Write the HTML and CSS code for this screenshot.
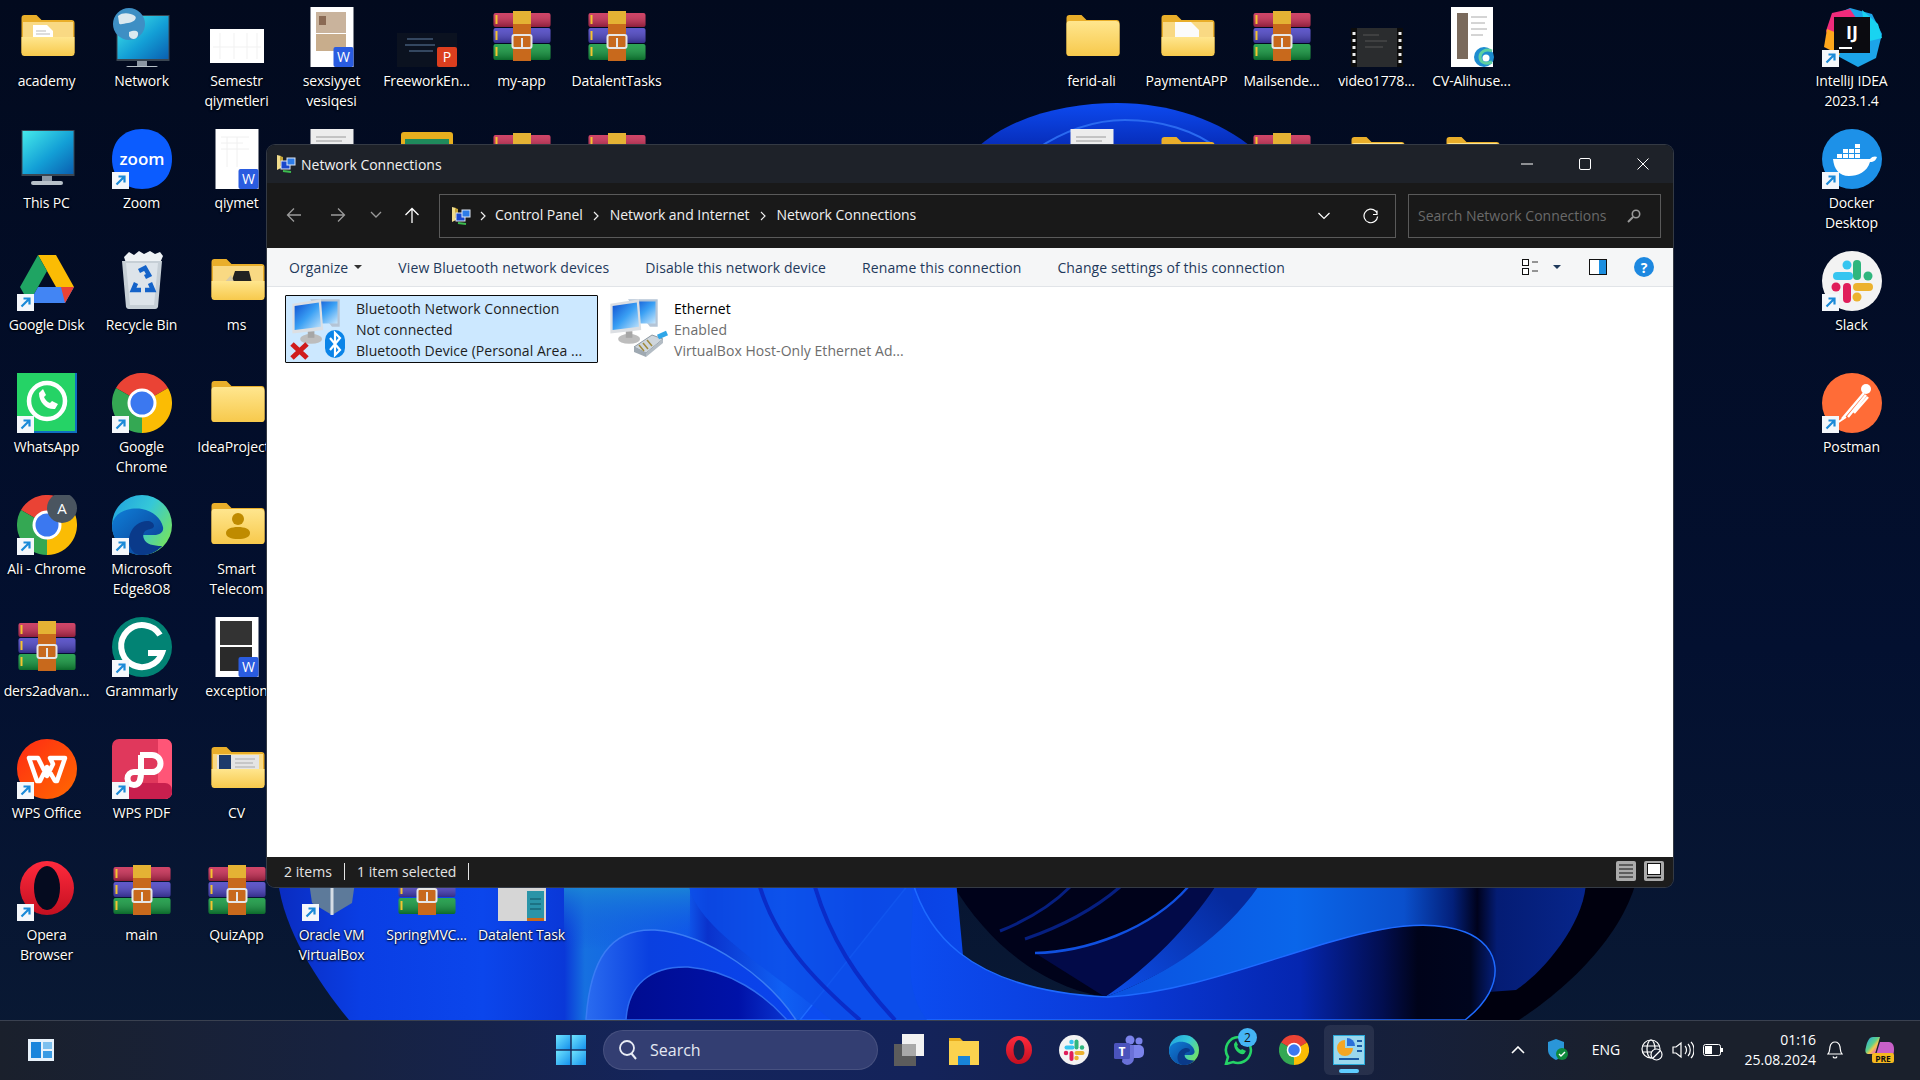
FILE: index.html
```html
<!DOCTYPE html>
<html lang="en">
<head>
<meta charset="utf-8">
<title>Network Connections</title>
<link rel="stylesheet" href="styles.css">
</head>
<body>
<svg class="defs" width="0" height="0" aria-hidden="true">
<defs>
  <linearGradient id="fdFront" x1="0" y1="0" x2="0" y2="1"><stop offset="0" stop-color="#ffe68e"/><stop offset="1" stop-color="#f7c94c"/></linearGradient>
  <linearGradient id="screen" x1="0" y1="0" x2="1" y2="1"><stop offset="0" stop-color="#45eaea"/><stop offset=".55" stop-color="#139fd6"/><stop offset="1" stop-color="#0a5fb0"/></linearGradient>
  <linearGradient id="edgeTop" x1="0" y1="0" x2="1" y2=".6"><stop offset="0" stop-color="#1f9fe0"/><stop offset=".55" stop-color="#35c8d8"/><stop offset="1" stop-color="#6fe06a"/></linearGradient>
  <linearGradient id="edgeBlue" x1="0" y1="0" x2="1" y2="1"><stop offset="0" stop-color="#0f7fd8"/><stop offset="1" stop-color="#0a3a90"/></linearGradient>
  <linearGradient id="operaG" x1="0" y1="0" x2="0" y2="1"><stop offset="0" stop-color="#ff2a3d"/><stop offset="1" stop-color="#c30f20"/></linearGradient>
  <linearGradient id="wps" x1="0" y1="0" x2="1" y2="1"><stop offset="0" stop-color="#ff2a14"/><stop offset="1" stop-color="#ff6a00"/></linearGradient>
  <linearGradient id="netA" x1="0" y1="0" x2="1" y2="1"><stop offset="0" stop-color="#0f4fd0"/><stop offset=".5" stop-color="#3aa0f4"/><stop offset="1" stop-color="#c9e6fb"/></linearGradient>
  <linearGradient id="copilot" x1="0" y1="0" x2="1" y2="1"><stop offset="0" stop-color="#1fa6e8"/><stop offset=".45" stop-color="#5fd08a"/><stop offset=".6" stop-color="#f6c84a"/><stop offset=".8" stop-color="#e86ab0"/><stop offset="1" stop-color="#8a5ce8"/></linearGradient>
  <linearGradient id="startG" x1="0" y1="0" x2="1" y2="1"><stop offset="0" stop-color="#6fe4ff"/><stop offset="1" stop-color="#1490ec"/></linearGradient>
  <linearGradient id="rarShade" x1="0" y1="0" x2="0" y2="1"><stop offset="0" stop-color="#fff" stop-opacity=".12"/><stop offset="1" stop-color="#000" stop-opacity=".3"/></linearGradient>

  <g id="sc"><rect x="0" y="43" width="17" height="17" fill="#f4f7fb"/><path d="M4.5 55.5 12 48M6.5 47.5h6v6" fill="none" stroke="#1b8ad8" stroke-width="2.2"/></g>

  <g id="folder"><path d="M4.5 11a3 3 0 0 1 3-3h12l5 5h30a3 3 0 0 1 3 3v30a3 3 0 0 1-3 3h-47a3 3 0 0 1-3-3z" fill="#e9ae2a"/><path d="M4.5 17a3 3 0 0 1 3-3h46a4 4 0 0 1 4 4v28a3 3 0 0 1-3 3h-47a3 3 0 0 1-3-3z" fill="url(#fdFront)"/></g>
  <g id="fback"><path d="M4.5 11a3 3 0 0 1 3-3h12l5 5h30a3 3 0 0 1 3 3v30h-53z" fill="#e9ae2a"/><rect x="6" y="15" width="50" height="16" fill="#f9d983"/></g>
  <path id="ffront" d="M4.5 30h53v16a3 3 0 0 1-3 3h-47a3 3 0 0 1-3-3z" fill="url(#fdFront)"/>
  <g id="fAcademy"><use href="#fback"/><path d="M16 18h14l6 6v10H16z" fill="#fff"/><path d="M19 24h10M19 27h14" stroke="#bbb"/><use href="#ffront"/></g>
  <g id="fPay"><use href="#fback"/><path d="M18 15h16l8 8v12H18z" fill="#fbfbfb"/><use href="#ffront"/></g>
  <g id="fMs"><use href="#fback"/><path d="M24 32l4-12h14l3 12z" fill="#222"/><path d="M16 33l8-9 4 9z" fill="#d5c9a6"/><use href="#ffront"/></g>
  <g id="fSmart"><use href="#folder"/><circle cx="31" cy="24" r="6" fill="#bf8b00"/><path d="M19 38c0-4 5-6 12-6s12 2 12 6c0 4-5 6-12 6s-12-2-12-6z" fill="#bf8b00"/></g>
  <g id="fCv"><use href="#fback"/><rect x="10" y="16" width="42" height="17" fill="#e4e4e4"/><rect x="12" y="16" width="12" height="17" fill="#1d3a6b"/><path d="M28 20h20M28 24h18M28 28h20" stroke="#aaa"/><use href="#ffront"/></g>

  <g id="rar">
    <rect x="1.5" y="6" width="57" height="14" rx="2" fill="#c92a52"/>
    <rect x="1.5" y="21" width="57" height="15" rx="2" fill="#4a42c4"/>
    <rect x="1.5" y="37" width="57" height="16" rx="2" fill="#10973d"/>
    <rect x="1.5" y="6" width="57" height="14" rx="2" fill="url(#rarShade)"/>
    <rect x="1.5" y="21" width="57" height="15" rx="2" fill="url(#rarShade)"/>
    <rect x="1.5" y="37" width="57" height="16" rx="2" fill="url(#rarShade)"/>
    <path d="M4.5 8v9M4.5 24v9M4.5 40v9" stroke="#f4c430" stroke-width="2"/>
    <rect x="21" y="4" width="18" height="50" fill="#c8691c"/>
    <rect x="21" y="4" width="18" height="13" fill="#e4b234"/>
    <rect x="20.500" y="28" width="19" height="13" rx="2" fill="none" stroke="#e6e6e6" stroke-width="2"/>
    <rect x="29" y="31" width="2" height="10" fill="#e6e6e6"/>
  </g>

  <g id="wbadge"><rect x="40" y="40" width="20" height="20" rx="2" fill="#2a5ce0"/><text x="50" y="55" class="svgt" font-size="14" fill="#fff" text-anchor="middle">W</text></g>
  <g id="docSem"><rect x="3" y="22" width="54" height="34" fill="#fff"/><path d="M13 26v26M27 26v26M40 26v26M50 26v26M6 40h48" stroke="#f1f1f1"/></g>
  <g id="docQ"><rect x="8.500" y="0" width="43" height="60" fill="#fff"/><path d="M14 8h28M14 14h22M14 20h28M20 8v30M30 8v30" stroke="#f0f0f0"/><use href="#wbadge" x="-8.500"/></g>
  <g id="docId"><rect x="8.500" y="0" width="43" height="60" fill="#fff"/><rect x="14" y="5" width="30" height="21" fill="#c9b39c"/><rect x="14" y="27" width="30" height="17" fill="#c8ad8c"/><rect x="17" y="9" width="7" height="9" fill="#8a6a54"/><use href="#wbadge" x="-8.500"/></g>
  <g id="docPlain"><rect x="8.500" y="0" width="43" height="60" fill="#ededed"/><path d="M14 8h30M14 12h26M14 16h30M14 20h24" stroke="#9a9a9a"/></g>
  <g id="ppt"><rect x="0" y="26" width="60" height="34" fill="#0b1220"/><path d="M10 32h26M8 38h30M12 44h24" stroke="#5f7da0"/><rect x="40" y="40" width="20" height="20" rx="2" fill="#dc3e1e"/><text x="50" y="55" class="svgt" font-size="14" fill="#fff" text-anchor="middle">P</text></g>
  <g id="docEx"><rect x="8.500" y="0" width="43" height="60" fill="#fff"/><rect x="13" y="4" width="32" height="24" fill="#333"/><rect x="13" y="30" width="32" height="24" fill="#2a2a2a"/><use href="#wbadge" x="-8.500"/></g>
  <g id="video"><rect x="4" y="21" width="52" height="40" fill="#2a2c2e"/><rect x="4" y="21" width="6" height="40" fill="#0c0c0c"/><rect x="50" y="21" width="6" height="40" fill="#0c0c0c"/><path d="M7 25v36M53 25v36" stroke="#eee" stroke-width="3" stroke-dasharray="3 4"/><path d="M16 28h16M18 34h22M18 40h18" stroke="#555"/></g>
  <g id="cvDoc"><rect x="9" y="0" width="42" height="60" fill="#fff"/><rect x="15" y="6" width="11" height="46" fill="#7a6a5c"/><path d="M29 10h16M29 16h14M29 22h16M29 28h12" stroke="#aaa"/><circle cx="42" cy="50" r="10" fill="#1d8cd0"/><path d="M50 44c-6-3-12 1-12 6s5 8 12 5" fill="none" stroke="#5fd0a0" stroke-width="3"/><circle cx="44" cy="51" r="3.500" fill="#fff"/></g>
  <g id="docGreen"><rect x="4" y="3" width="52" height="50" rx="3" fill="#e6ae1e"/><rect x="8" y="10" width="44" height="40" fill="#1f8a5c"/></g>

  <g id="pc"><rect x="4.500" y="1" width="53" height="46" fill="#3b4652"/><rect x="5.500" y="2" width="51" height="43" fill="url(#screen)"/><rect x="25" y="47" width="10" height="6" fill="#8c97a4"/><rect x="14" y="52" width="32" height="4" rx="2" fill="#b8c1c9"/></g>
  <g id="net"><use href="#pc" y="7"/><circle cx="17" cy="17" r="16" fill="#3e8fc4"/><path d="M6 9c5-4 12-3 17 0 3 3-3 7-7 7s-8 3-9 0zM17 25c5-2 10-2 9 3s-7 5-9 1z" fill="#dce9ef"/></g>
  <g id="zoomI"><path d="M30 0C48 0 60 12 60 30S48 60 30 60 0 48 0 30 12 0 30 0z" fill="#0b5cff"/><text x="30" y="36" class="svgm" font-size="17" fill="#fff" text-anchor="middle">zoom</text></g>
  <g id="drive"><path d="M21 4h18l18 32H39z" fill="#fbbc04"/><path d="M21 4 3 36l9 16 18-32z" fill="#1fa463"/><path d="M12 52h36l9-16H21z" fill="#4285f4"/><path d="M48 52l9-16H44z" fill="#ea4335"/></g>
  <g id="bin"><path d="M12 6l5-5 5 3 5-4 5 3 6-3 5 3 5-2 3 4-3 7H14z" fill="#eef2f5"/><path d="M10 10h40l-4 46a3 3 0 0 1-3 2H17a3 3 0 0 1-3-2z" fill="#c6cfd6"/><path d="M14 12h32l-4 42H18z" fill="#dde4ea"/><path d="M27 20l6-3 4 7-4 2M24 32l-3 7h8M38 32l3 7h-8" fill="none" stroke="#1463c9" stroke-width="4.500"/></g>
  <g id="wa"><rect x="0" y="0" width="60" height="60" fill="#0f6fc0"/><rect x="0" y="0" width="58" height="58" fill="#25d366"/><circle cx="30" cy="28" r="18" fill="none" stroke="#fff" stroke-width="4.500"/><path d="M22 20c0 10 8 17 16 16l3-5-6-3-2 2c-3-1-5-4-6-6l2-2-3-6z" fill="#fff"/></g>
  <g id="chrome"><path d="M30 30 4 15A30 30 0 0 1 56 15z" fill="#ea4335"/><path d="M30 30 4 15A30 30 0 0 0 30 60z" fill="#34a853"/><path d="M30 30 56 15A30 30 0 0 1 30 60z" fill="#fbbc04"/><circle cx="30" cy="30" r="14.500" fill="#fff"/><circle cx="30" cy="30" r="11.500" fill="#3b78f0"/></g>
  <g id="edge"><circle cx="30" cy="30" r="30" fill="url(#edgeTop)"/><path d="M0 30C2 17 17 12 30 14c11 2 19 9 21 18 1 5-3 8-9 8H28c1 8 11 13 22 11-6 6-13 9-20 9C13 60 0 47 0 30z" fill="url(#edgeBlue)"/><path d="M27 60c-8-2-12-12-9-21 3-8 10-13 17-13 4 0 7 2 7 5 0 2-3 3-7 4-3 1-5 5-3 9 2 5 9 7 18 7-6 6-14 10-23 9z" fill="#0a3a8a"/></g>
  <g id="gram"><circle cx="30" cy="30" r="30" fill="#028374"/><path d="M48 18A21 21 0 1 0 50 36H36" fill="none" stroke="#fff" stroke-width="6"/></g>
  <g id="wpsO"><ellipse cx="30" cy="30" rx="30" ry="30" fill="url(#wps)"/><path d="M12 19h9l9 18 6-12-3-6h15L40 42h-2l-8-14-7 14h-3z" fill="none" stroke="#fff" stroke-width="4.500" stroke-linejoin="round"/></g>
  <g id="wpsP"><rect x="0" y="0" width="60" height="60" rx="7" fill="#e0385c"/><path d="M46 0h7a7 7 0 0 1 7 7v46a7 7 0 0 1-7 7H46z" fill="#ff5577"/><path d="M17 44h36a7 7 0 0 1 7 7v2a7 7 0 0 1-7 7H17z" fill="#c81f4e"/><path d="M28 16h12a8 8 0 0 1 0 17H22a6 6 0 0 0 0 13c7 0 7-8 7-13V16" fill="none" stroke="#fff" stroke-width="6"/></g>
  <g id="opera"><ellipse cx="30" cy="27" rx="27" ry="27" fill="url(#operaG)"/><ellipse cx="30" cy="27" rx="13" ry="22" fill="#050b1f"/></g>
  <g id="operaT"><ellipse cx="30" cy="30" rx="26" ry="28" fill="url(#operaG)"/><ellipse cx="30" cy="30" rx="11" ry="20" fill="#1a2246"/></g>
  <g id="ij"><path d="M12 8 28 1l22 6 10 20-6 24-18 9-26-14L8 30z" fill="#1ca4e8"/><path d="M4 24 10 6l18-4 8 12-24 28z" fill="#f02b7a"/><path d="M2 40l3-18 10 4 3 22z" fill="#ffa71c"/><path d="M40 3l16 14 4 14-16 4z" fill="#19d3f0"/><rect x="12" y="10" width="36" height="36" fill="#0b0b10"/><text x="30" y="32" class="svgb" font-size="18" fill="#fff" text-anchor="middle">IJ</text><rect x="17" y="40" width="13" height="2" fill="#fff"/></g>
  <g id="docker"><circle cx="30" cy="30" r="30" fill="#1d91e8"/><path d="M11 30h37c2-3 6-3 7-2-1 3-3 5-7 5-3 10-12 14-21 14-10 0-15-7-16-17z" fill="#fff"/><path d="M15 25h5v4h-5zM21 25h5v4h-5zM27 25h5v4h-5zM33 25h5v4h-5zM21 20h5v4h-5zM27 20h5v4h-5zM33 20h5v4h-5zM33 15h5v4h-5z" fill="#fff"/></g>
  <g id="slackI"><rect x="11" y="21" width="20" height="8" rx="4" fill="#36c5f0"/><circle cx="25" cy="14" r="4.500" fill="#36c5f0"/><rect x="31" y="9" width="8" height="20" rx="4" fill="#2eb67d"/><circle cx="46" cy="25" r="4.500" fill="#2eb67d"/><rect x="31" y="32" width="20" height="8" rx="4" fill="#ecb22e"/><circle cx="35" cy="46" r="4.500" fill="#ecb22e"/><rect x="21" y="32" width="8" height="20" rx="4" fill="#e01e5a"/><circle cx="14" cy="36" r="4.500" fill="#e01e5a"/></g>
  <g id="slack"><circle cx="30" cy="30" r="30" fill="#f3f3f3"/><use href="#slackI"/></g>
  <g id="postman"><circle cx="30" cy="30" r="30" fill="#ff6c37"/><path d="M20 46 42 20M26 44 44 22M32 40 46 24" stroke="#fff" stroke-width="2.500"/><circle cx="44" cy="16" r="5" fill="#fff"/><path d="M12 52l12-8" stroke="#fff" stroke-width="2"/></g>
  <g id="vbox"><path d="M12 4h36l6 10-4 28-20 12-20-12-4-28z" fill="#5d7a9a"/><path d="M30 54V22L8 12M30 22l22-10" stroke="#d5dde5" stroke-width="3" fill="none"/></g>
  <g id="dtask"><rect x="6" y="0" width="48" height="60" fill="#d6d6d6"/><rect x="35" y="30" width="17" height="29" fill="#2a94a8"/><path d="M38 38h11M38 43h11M38 48h11" stroke="#0f5060"/><rect x="35" y="57" width="17" height="3" fill="#c8691c"/></g>

  <g id="netSm"><path d="M2 1l4 1v12l-4 2z" fill="#f0dc8c"/><path d="M5 2l3 1v9H5z" fill="#c9a83a"/><rect x="6" y="7" width="9" height="8" fill="#1a48cc" stroke="#dfe8f5"/><rect x="12" y="4" width="8" height="7" fill="#2d7ce8" stroke="#dfe8f5"/><path d="M8 17l8 1" stroke="#3dbd4f" stroke-width="2"/></g>

  <g id="monitor" transform="translate(-2 -1) scale(1.1)">
    <ellipse cx="21" cy="39" rx="10" ry="4.500" fill="#bdbdbd"/>
    <rect x="18" y="32" width="6" height="6" fill="#a6a6a6"/>
    <path d="M20 3l27 0 0 25-7 0z" fill="#b4c4d6"/>
    <rect x="23" y="5" width="22" height="20" fill="url(#netA)"/>
    <path d="M4 7 30 3l2 28-28 3z" fill="#dcdfe3"/>
    <path d="M6 9l22-3 2 22-24 3z" fill="url(#netA)"/>
  </g>
  <g id="bt"><rect x="35" y="33" width="20" height="28" rx="10" fill="#0a84e8"/><path d="M40 41l10 12-5 5V36l5 5-10 12" fill="none" stroke="#fff" stroke-width="2.200"/></g>
  <g id="redx"><path d="M2 47l15 14M17 47 2 61" stroke="#d01c1c" stroke-width="5"/></g>
  <g id="plug"><path d="M26 50l18-12 11 4-17 14z" fill="#cfd6dc" stroke="#8d99a3"/><path d="M26 50v5l12 5v-4z" fill="#9fa9b2"/><path d="M38 56v4l17-14v-4z" fill="#b3bcc4"/><path d="M31 48l5 6M35 46l5 6M39 43l5 6" stroke="#a08a3a" stroke-width="1.500"/><path d="M50 40l9-4" stroke="#2fa6e8" stroke-width="5"/></g>
</defs>
</svg>

<div class="screen">
  <svg class="wallpaper" viewBox="0 0 1920 1080" preserveAspectRatio="none" aria-hidden="true">
    <defs>
      <linearGradient id="wBase" x1="0" y1="0" x2="0" y2="1"><stop offset="0" stop-color="#020a1e"/><stop offset=".6" stop-color="#031030"/><stop offset="1" stop-color="#0a1a34"/></linearGradient>
      <linearGradient id="wLeft" x1="278" y1="0" x2="960" y2="0" gradientUnits="userSpaceOnUse"><stop offset="0" stop-color="#0a2cc0"/><stop offset=".12" stop-color="#0a3ee4"/><stop offset=".3" stop-color="#0b46ec"/><stop offset=".42" stop-color="#0a38d8"/><stop offset=".45" stop-color="#1670e0"/><stop offset=".6" stop-color="#0f58ec"/><stop offset=".63" stop-color="#0a32cc"/><stop offset=".74" stop-color="#1060f4"/><stop offset=".86" stop-color="#0a3ee0"/><stop offset="1" stop-color="#0a46e8"/></linearGradient>
      <linearGradient id="wGlow" x1="0" y1="0" x2="0" y2="1"><stop offset="0" stop-color="#1c8ed4"/><stop offset="1" stop-color="#1048e0" stop-opacity="0"/></linearGradient>
      <linearGradient id="wArch" x1="0" y1="0" x2="1" y2="0"><stop offset="0" stop-color="#2a6cf0"/><stop offset=".3" stop-color="#0a40e0"/><stop offset="1" stop-color="#0a44ee"/></linearGradient>
      <linearGradient id="wInner" x1="0" y1="0" x2="1" y2="0"><stop offset="0" stop-color="#000c90"/><stop offset=".7" stop-color="#0012a8"/><stop offset="1" stop-color="#0a34d0"/></linearGradient>
      <linearGradient id="wRight" x1="1100" y1="0" x2="1590" y2="0" gradientUnits="userSpaceOnUse"><stop offset="0" stop-color="#0a50e0"/><stop offset=".4" stop-color="#0a66ea"/><stop offset=".62" stop-color="#0a50cc"/><stop offset=".72" stop-color="#03207a"/><stop offset=".77" stop-color="#00021c"/><stop offset=".81" stop-color="#041c74"/><stop offset="1" stop-color="#07268c"/></linearGradient>
      <linearGradient id="wWave" x1="912" y1="0" x2="1500" y2="0" gradientUnits="userSpaceOnUse"><stop offset="0" stop-color="#0c4cf0"/><stop offset=".35" stop-color="#0a3ad8"/><stop offset=".66" stop-color="#0526b0"/><stop offset=".8" stop-color="#020e50"/><stop offset=".86" stop-color="#00031a"/><stop offset=".95" stop-color="#00051e"/><stop offset="1" stop-color="#05238c"/></linearGradient>
      <linearGradient id="wDome" x1="0" y1="0" x2="0" y2="1"><stop offset="0" stop-color="#0d4af0"/><stop offset="1" stop-color="#062ab4"/></linearGradient>
      <linearGradient id="wStreak" x1="1215" y1="887" x2="1105" y2="997" gradientUnits="userSpaceOnUse"><stop offset="0" stop-color="#062a9c"/><stop offset="1" stop-color="#0d50ec"/></linearGradient>
    </defs>
    <rect width="1920" height="1080" fill="url(#wBase)"/>
    <path d="M975 150C1010 115 1070 103 1117 103c53 0 103 17 138 47z" fill="url(#wDome)"/>
    <path d="M1035 150c30-20 60-30 90-30 35 0 70 10 95 30" fill="none" stroke="#2a6af0" stroke-width="2"/>
    <path d="M1400 860h240c-5 60-60 120-121 160h-120z" fill="#00000e"/>
    <path d="M1100 880h486c0 40-40 90-70 110l-416 30z" fill="url(#wRight)"/>
    <path d="M950 880h308c-28 50-88 95-153 117-50-8-110-40-155-117z" fill="#00021a"/>
    <path d="M1035 953c50-1 115-23 153-66h27c-25 38-60 80-110 110z" fill="#020a48"/>
    <path d="M1258 887c-33 48-88 88-153 110 45-30 85-72 110-110z" fill="url(#wStreak)"/>
    <path d="M1188 887c-38 43-103 65-153 66" fill="none" stroke="#1050e0" stroke-width="2.500"/>
    <path d="M1120 887c-28 24-60 40-95 52M1070 887c-18 18-40 32-70 44" fill="none" stroke="#061f80" stroke-width="3"/>
    <path d="M278 880c5 50 42 105 71 140h620l-13-140z" fill="url(#wLeft)"/>
    <path d="M564 880h126v70H564z" fill="url(#wGlow)"/>
    <path d="M912 880c13 45 48 110 196 117 132-7 272-97 357-65 35 13 45 53 0 88H800z" fill="url(#wWave)" stroke="#1e6aff" stroke-width="1.500"/>
    <path d="M689 887c10 40 70 75 142 133h96c-30-40-10-90-15-133z" fill="#0c4ee8" opacity=".75"/>
    <path d="M760 887c15 50 50 90 100 133M815 887c15 50 40 90 80 133" stroke="#0a2cc8" stroke-width="4" fill="none"/>
    <path d="M586 1020c4-60 24-92 69-90 55 4 115 50 141 90z" fill="url(#wArch)" stroke="#3a7cf4" stroke-width="1.500"/>
    <path d="M626 1020c2-35 24-54 62-53 42 3 77 28 99 53z" fill="url(#wInner)" stroke="#2e6cf0" stroke-width="1.500"/>
  </svg>

  <main class="desktop">
    <div class="col">
      <div class="tile"><svg class="ico" viewBox="0 0 60 60"><use href="#fAcademy"/></svg><span class="lbl">academy</span></div>
      <div class="tile"><svg class="ico" viewBox="0 0 60 60"><use href="#pc"/></svg><span class="lbl">This PC</span></div>
      <div class="tile"><svg class="ico" viewBox="0 0 60 60"><use href="#drive"/><use href="#sc"/></svg><span class="lbl">Google Disk</span></div>
      <div class="tile"><svg class="ico" viewBox="0 0 60 60"><use href="#wa"/><use href="#sc"/></svg><span class="lbl">WhatsApp</span></div>
      <div class="tile"><svg class="ico" viewBox="0 0 60 60"><use href="#chrome"/><circle cx="45" cy="13" r="15" fill="#4a5560"/><text x="45" y="19" class="svgt" font-size="15" fill="#fff" text-anchor="middle">A</text><use href="#sc"/></svg><span class="lbl">Ali - Chrome</span></div>
      <div class="tile"><svg class="ico" viewBox="0 0 60 60"><use href="#rar"/></svg><span class="lbl">ders2advan...</span></div>
      <div class="tile"><svg class="ico" viewBox="0 0 60 60"><use href="#wpsO"/><use href="#sc"/></svg><span class="lbl">WPS Office</span></div>
      <div class="tile"><svg class="ico" viewBox="0 0 60 60"><use href="#opera"/><use href="#sc"/></svg><span class="lbl">Opera<br>Browser</span></div>
    </div>
    <div class="col">
      <div class="tile"><svg class="ico" viewBox="0 0 60 60"><use href="#net"/></svg><span class="lbl">Network</span></div>
      <div class="tile"><svg class="ico" viewBox="0 0 60 60"><use href="#zoomI"/><use href="#sc"/></svg><span class="lbl">Zoom</span></div>
      <div class="tile"><svg class="ico" viewBox="0 0 60 60"><use href="#bin"/></svg><span class="lbl">Recycle Bin</span></div>
      <div class="tile"><svg class="ico" viewBox="0 0 60 60"><use href="#chrome"/><use href="#sc"/></svg><span class="lbl">Google<br>Chrome</span></div>
      <div class="tile"><svg class="ico" viewBox="0 0 60 60"><use href="#edge"/><use href="#sc"/></svg><span class="lbl">Microsoft<br>Edge8O8</span></div>
      <div class="tile"><svg class="ico" viewBox="0 0 60 60"><use href="#gram"/><use href="#sc"/></svg><span class="lbl">Grammarly</span></div>
      <div class="tile"><svg class="ico" viewBox="0 0 60 60"><use href="#wpsP"/><use href="#sc"/></svg><span class="lbl">WPS PDF</span></div>
      <div class="tile"><svg class="ico" viewBox="0 0 60 60"><use href="#rar"/></svg><span class="lbl">main</span></div>
    </div>
    <div class="col">
      <div class="tile"><svg class="ico" viewBox="0 0 60 60"><use href="#docSem"/></svg><span class="lbl">Semestr<br>qiymetleri</span></div>
      <div class="tile"><svg class="ico" viewBox="0 0 60 60"><use href="#docQ"/></svg><span class="lbl">qiymet</span></div>
      <div class="tile"><svg class="ico" viewBox="0 0 60 60"><use href="#fMs"/></svg><span class="lbl">ms</span></div>
      <div class="tile"><svg class="ico" viewBox="0 0 60 60"><use href="#folder"/></svg><span class="lbl">IdeaProjects</span></div>
      <div class="tile"><svg class="ico" viewBox="0 0 60 60"><use href="#fSmart"/></svg><span class="lbl">Smart<br>Telecom</span></div>
      <div class="tile"><svg class="ico" viewBox="0 0 60 60"><use href="#docEx"/></svg><span class="lbl">exception</span></div>
      <div class="tile"><svg class="ico" viewBox="0 0 60 60"><use href="#fCv"/></svg><span class="lbl">CV</span></div>
      <div class="tile"><svg class="ico" viewBox="0 0 60 60"><use href="#rar"/></svg><span class="lbl">QuizApp</span></div>
    </div>
    <div class="col">
      <div class="tile"><svg class="ico" viewBox="0 0 60 60"><use href="#docId"/></svg><span class="lbl">sexsiyyet<br>vesiqesi</span></div>
      <div class="tile"><svg class="ico" viewBox="0 0 60 60"><use href="#docPlain"/></svg></div>
      <div class="tile tile-last"><svg class="ico" viewBox="0 0 60 60"><use href="#vbox"/><use href="#sc"/></svg><span class="lbl">Oracle VM<br>VirtualBox</span></div>
    </div>
    <div class="col">
      <div class="tile"><svg class="ico" viewBox="0 0 60 60"><use href="#ppt"/></svg><span class="lbl">FreeworkEn...</span></div>
      <div class="tile"><svg class="ico" viewBox="0 0 60 60"><use href="#docGreen"/></svg></div>
      <div class="tile tile-last"><svg class="ico" viewBox="0 0 60 60"><use href="#rar"/></svg><span class="lbl">SpringMVC...</span></div>
    </div>
    <div class="col">
      <div class="tile"><svg class="ico" viewBox="0 0 60 60"><use href="#rar"/></svg><span class="lbl">my-app</span></div>
      <div class="tile"><svg class="ico" viewBox="0 0 60 60"><use href="#rar"/></svg></div>
      <div class="tile tile-last"><svg class="ico" viewBox="0 0 60 60"><use href="#dtask"/></svg><span class="lbl">Datalent Task</span></div>
    </div>
    <div class="col">
      <div class="tile"><svg class="ico" viewBox="0 0 60 60"><use href="#rar"/></svg><span class="lbl">DatalentTasks</span></div>
      <div class="tile"><svg class="ico" viewBox="0 0 60 60"><use href="#rar"/></svg></div>
    </div>
    <div class="col-gap-four"></div>
    <div class="col">
      <div class="tile"><svg class="ico" viewBox="0 0 60 60"><use href="#folder"/></svg><span class="lbl">ferid-ali</span></div>
      <div class="tile"><svg class="ico" viewBox="0 0 60 60"><use href="#docPlain"/></svg></div>
    </div>
    <div class="col">
      <div class="tile"><svg class="ico" viewBox="0 0 60 60"><use href="#fPay"/></svg><span class="lbl">PaymentAPP</span></div>
      <div class="tile"><svg class="ico" viewBox="0 0 60 60"><use href="#fAcademy"/></svg></div>
    </div>
    <div class="col">
      <div class="tile"><svg class="ico" viewBox="0 0 60 60"><use href="#rar"/></svg><span class="lbl">Mailsende...</span></div>
      <div class="tile"><svg class="ico" viewBox="0 0 60 60"><use href="#rar"/></svg></div>
    </div>
    <div class="col">
      <div class="tile"><svg class="ico" viewBox="0 0 60 60"><use href="#video"/></svg><span class="lbl">video1778...</span></div>
      <div class="tile"><svg class="ico" viewBox="0 0 60 60"><use href="#folder"/></svg></div>
    </div>
    <div class="col">
      <div class="tile"><svg class="ico" viewBox="0 0 60 60"><use href="#cvDoc"/></svg><span class="lbl">CV-Alihuse...</span></div>
      <div class="tile"><svg class="ico" viewBox="0 0 60 60"><use href="#folder"/></svg></div>
    </div>
    <div class="col-gap-three"></div>
    <div class="col">
      <div class="tile"><svg class="ico" viewBox="0 0 60 60"><use href="#ij"/><use href="#sc"/></svg><span class="lbl">IntelliJ IDEA<br>2023.1.4</span></div>
      <div class="tile"><svg class="ico" viewBox="0 0 60 60"><use href="#docker"/><use href="#sc"/></svg><span class="lbl">Docker<br>Desktop</span></div>
      <div class="tile"><svg class="ico" viewBox="0 0 60 60"><use href="#slack"/><use href="#sc"/></svg><span class="lbl">Slack</span></div>
      <div class="tile"><svg class="ico" viewBox="0 0 60 60"><use href="#postman"/><use href="#sc"/></svg><span class="lbl">Postman</span></div>
    </div>
  </main>

  <section class="window">
    <header class="titlebar">
      <svg class="title-ico" viewBox="0 0 22 20"><use href="#netSm"/></svg>
      <span class="title-text">Network Connections</span>
      <div class="caption">
        <span class="cap-btn"><svg width="12" height="12" viewBox="0 0 12 12"><path d="M0 6h12" stroke="#fff"/></svg></span>
        <span class="cap-btn"><svg width="12" height="12" viewBox="0 0 12 12"><rect x=".5" y=".5" width="11" height="11" rx="1.500" fill="none" stroke="#fff"/></svg></span>
        <span class="cap-btn"><svg width="12" height="12" viewBox="0 0 12 12"><path d="M.5.500l11 11M11.500.500l-11 11" stroke="#fff"/></svg></span>
      </div>
    </header>
    <div class="navbar">
      <span class="nav-btn nav-back"><svg width="16" height="16" viewBox="0 0 16 16"><path d="M15 8H1.500M8 1.500 1.500 8 8 14.500" fill="none" stroke="#9a9a9a" stroke-width="1.300"/></svg></span>
      <span class="nav-btn nav-fwd"><svg width="16" height="16" viewBox="0 0 16 16"><path d="M1 8h13.500M8 1.500 14.500 8 8 14.500" fill="none" stroke="#9a9a9a" stroke-width="1.300"/></svg></span>
      <span class="nav-btn nav-rec"><svg width="12" height="8" viewBox="0 0 12 8"><path d="M1 1l5 5 5-5" fill="none" stroke="#9a9a9a" stroke-width="1.300"/></svg></span>
      <span class="nav-btn nav-up"><svg width="16" height="16" viewBox="0 0 16 16"><path d="M8 16V1.500M1.500 8 8 1.500 14.500 8" fill="none" stroke="#fff" stroke-width="1.300"/></svg></span>
      <div class="address">
        <svg class="addr-ico" viewBox="0 0 22 20"><use href="#netSm"/></svg>
        <span class="sep sep-first"><svg width="6" height="10" viewBox="0 0 6 10"><path d="M1 1l4 4-4 4" fill="none" stroke="#eee" stroke-width="1.200"/></svg></span>
        <span class="crumb">Control Panel</span>
        <span class="sep"><svg width="6" height="10" viewBox="0 0 6 10"><path d="M1 1l4 4-4 4" fill="none" stroke="#eee" stroke-width="1.200"/></svg></span>
        <span class="crumb">Network and Internet</span>
        <span class="sep"><svg width="6" height="10" viewBox="0 0 6 10"><path d="M1 1l4 4-4 4" fill="none" stroke="#eee" stroke-width="1.200"/></svg></span>
        <span class="crumb">Network Connections</span>
        <span class="addr-end">
          <svg width="12" height="8" viewBox="0 0 12 8"><path d="M.5 1l5.500 5.500L11.500 1" fill="none" stroke="#fff" stroke-width="1.200"/></svg>
          <svg width="16" height="16" viewBox="0 0 16 16"><path d="M14 2.500v4h-4M14.600 8.500A6.800 6.800 0 1 1 12.500 3L14 5" fill="none" stroke="#fff" stroke-width="1.200"/></svg>
        </span>
      </div>
      <div class="search">
        <span class="search-text">Search Network Connections</span>
        <svg width="14" height="14" viewBox="0 0 14 14"><circle cx="9" cy="5" r="3.700" fill="none" stroke="#9a9a9a" stroke-width="1.600"/><path d="M6 8 1 13" stroke="#9a9a9a" stroke-width="2"/></svg>
      </div>
    </div>
    <div class="toolbar">
      <span class="tool tool-org">Organize<i class="caret"></i></span>
      <span class="tool">View Bluetooth network devices</span>
      <span class="tool">Disable this network device</span>
      <span class="tool">Rename this connection</span>
      <span class="tool">Change settings of this connection</span>
      <div class="tool-right">
        <span class="tr-view"><svg width="18" height="18" viewBox="0 0 18 18"><rect x="1.500" y="1.500" width="6" height="6" fill="#fff" stroke="#111"/><rect x="1.500" y="10.500" width="6" height="6" fill="#fff" stroke="#111"/><path d="M11 4h6M11 13h6" stroke="#333"/></svg></span>
        <i class="caret caret-blue"></i>
        <span class="tr-pane"><svg width="18" height="16" viewBox="0 0 18 16"><rect x=".5" y=".5" width="17" height="15" fill="#fff" stroke="#111"/><rect x="10" y="1" width="7" height="14" fill="#1d8fe0"/></svg></span>
        <span class="tr-help">?</span>
      </div>
    </div>
    <div class="content">
      <article class="item item-selected">
        <svg class="item-ico" viewBox="0 0 60 64"><use href="#monitor"/><use href="#redx"/><use href="#bt"/></svg>
        <div class="item-text">
          <span>Bluetooth Network Connection</span>
          <span>Not connected</span>
          <span>Bluetooth Device (Personal Area ...</span>
        </div>
      </article>
      <article class="item">
        <svg class="item-ico" viewBox="0 0 60 64"><use href="#monitor"/><use href="#plug"/></svg>
        <div class="item-text item-text-muted">
          <span>Ethernet</span>
          <span>Enabled</span>
          <span>VirtualBox Host-Only Ethernet Ad...</span>
        </div>
      </article>
    </div>
    <footer class="statusbar">
      <span class="stat">2 items</span>
      <span class="stat">1 item selected</span>
      <div class="stat-right">
        <span class="vbtn"><svg width="14" height="14" viewBox="0 0 14 14"><path d="M0 1h14M0 5h14M0 9h14M0 13h14" stroke="#111" stroke-width="1.200"/></svg></span>
        <span class="vbtn"><svg width="14" height="16" viewBox="0 0 14 16"><rect x=".5" y=".5" width="13" height="11" fill="#fff" stroke="#111"/><path d="M0 14.500h14" stroke="#111" stroke-width="1.500"/></svg></span>
      </div>
    </footer>
  </section>

  <footer class="taskbar">
    <span class="widget"><svg width="28" height="24" viewBox="0 0 28 24"><rect x="1" y="1" width="26" height="22" fill="#e8f2fb"/><rect x="4" y="4" width="10" height="16" fill="#1c86dc"/><rect x="16" y="4" width="9" height="7" fill="#7ec0ee"/><rect x="16" y="13" width="9" height="7" fill="#3a9be4"/></svg></span>
    <span class="start"><svg width="30" height="30" viewBox="0 0 30 30"><rect width="14.300" height="14.300" fill="url(#startG)"/><rect x="15.700" width="14.300" height="14.300" fill="url(#startG)"/><rect y="15.700" width="14.300" height="14.300" fill="url(#startG)"/><rect x="15.700" y="15.700" width="14.300" height="14.300" fill="url(#startG)"/></svg></span>
    <div class="tb-search">
      <svg width="20" height="22" viewBox="0 0 20 22"><circle cx="9" cy="9" r="7" fill="none" stroke="#e8ecf5" stroke-width="1.800"/><path d="M13.500 14.500 18 20" stroke="#e8ecf5" stroke-width="2"/></svg>
      <span>Search</span>
    </div>
    <div class="apps">
      <span class="app"><svg width="30" height="32" viewBox="0 0 30 32"><rect x="0" y="10" width="22" height="22" fill="#5c5c5c"/><rect x="8" y="0" width="22" height="22" fill="#f2f2f2"/><rect x="8" y="10" width="14" height="12" fill="#a9a9a9"/></svg></span>
      <span class="app"><svg width="30" height="30" viewBox="0 0 30 30"><path d="M0 3h11l3 3h16v24H0z" fill="#e8ac1c"/><rect y="6" width="30" height="24" fill="#fbd24e"/><rect x="9" y="21" width="12" height="9" fill="#1884d8"/></svg></span>
      <span class="app"><svg class="tb-ico" viewBox="0 0 60 60"><use href="#operaT"/></svg></span>
      <span class="app"><svg class="tb-ico" viewBox="0 0 60 60"><use href="#slack"/></svg></span>
      <span class="app"><svg width="32" height="30" viewBox="0 0 32 30"><circle cx="26" cy="6" r="3.500" fill="#7b83eb"/><circle cx="17" cy="5" r="4.500" fill="#7b83eb"/><rect x="14" y="10" width="17" height="13" rx="5" fill="#7b83eb"/><path d="M11 10h10v13a7 7 0 0 1-7 7 8 8 0 0 1-5-3z" fill="#6a71d8"/><rect x="1" y="8" width="16" height="16" rx="1.500" fill="#4b53bc"/><text x="9" y="21" class="svgb" font-size="12" fill="#fff" text-anchor="middle">T</text></svg></span>
      <span class="app"><svg class="tb-ico" viewBox="0 0 60 60"><use href="#edge"/></svg></span>
      <span class="app app-badged"><svg width="30" height="30" viewBox="0 0 30 30"><path d="M15 2a13 13 0 0 0-11 20L2 29l7-2A13 13 0 1 0 15 2z" fill="none" stroke="#25d366" stroke-width="2.600"/><path d="M10 9c0 6 5 11 10 10l2-3-4-2-1 1c-2-1-3-2-4-4l1-1-2-4z" fill="#25d366"/></svg><b class="badge">2</b></span>
      <span class="app"><svg class="tb-ico" viewBox="0 0 60 60"><use href="#chrome"/></svg></span>
      <span class="app app-active"><svg width="32" height="30" viewBox="0 0 32 30"><rect x=".5" y=".5" width="31" height="29" fill="#9ad8ee" stroke="#29a9d8"/><path d="M12 5a8 8 0 1 0 8 8h-8z" fill="#f5a623"/><path d="M14 3a8 8 0 0 1 8 8h-8z" fill="#2a6fd8"/><path d="M24 6h5M24 11h5M24 16h5M6 24h20" stroke="#1b5da8" stroke-width="2"/></svg><i class="active-bar"></i></span>
    </div>
    <div class="tray">
      <span class="t40"><svg width="14" height="8" viewBox="0 0 14 8"><path d="M1 7l6-6 6 6" fill="none" stroke="#fff" stroke-width="1.600"/></svg></span>
      <span class="t40"><svg width="20" height="22" viewBox="0 0 20 22"><path d="M0 3l8-3 8 3v8c0 5-4 8-8 10-4-2-8-5-8-10z" fill="#2a96d8"/><circle cx="14" cy="15" r="6" fill="#0f8a3c"/><path d="M11 15l2 2 4-4" fill="none" stroke="#fff" stroke-width="1.400"/></svg></span>
      <span class="t56 tray-txt">ENG</span>
      <span class="t36"><svg width="22" height="22" viewBox="0 0 22 22"><g fill="none" stroke="#fff" stroke-width="1.200"><circle cx="10" cy="10" r="9"/><ellipse cx="10" cy="10" rx="4" ry="9"/><path d="M1.500 7h17M1.500 13h10"/></g><circle cx="15.500" cy="15.500" r="5.500" fill="#1a2030" stroke="#fff" stroke-width="1.200"/><path d="M12 19l7-7" stroke="#fff" stroke-width="1.200"/></svg></span>
      <span class="t26"><svg width="22" height="18" viewBox="0 0 22 18"><path d="M1 6h3l5-4v14l-5-4H1z" fill="none" stroke="#fff" stroke-width="1.200"/><path d="M13 5c2 2 2 6 0 8M16 3c3 3 3 9 0 12M19 1c4 4 4 12 0 16" fill="none" stroke="#fff" stroke-width="1.200"/></svg></span>
      <span class="t34"><svg width="20" height="12" viewBox="0 0 20 12"><rect x=".5" y=".5" width="17" height="11" rx="2" fill="none" stroke="#fff"/><rect x="2" y="2" width="7" height="8" fill="#fff"/><rect x="18" y="4" width="2" height="4" fill="#fff"/></svg></span>
      <span class="t86 clock"><span>01:16</span><span>25.08.2024</span></span>
      <span class="t38"><svg width="16" height="18" viewBox="0 0 16 18"><path d="M1 13c2-2 1.500-5 2-7 .5-3 2.500-5 5-5s4.500 2 5 5c.5 2 0 5 2 7z" fill="none" stroke="#fff" stroke-width="1.200"/><path d="M6 15.500c.5 2 3.500 2 4 0" fill="none" stroke="#fff" stroke-width="1.200"/></svg></span>
      <span class="t52"><svg width="30" height="28" viewBox="0 0 30 28"><path d="M8 1h7l-5 17H3C0 18 0 14 1 11 2 6 4 1 8 1z" fill="url(#copilot)"/><path d="M15 6h9c3 0 5 3 5 7 0 3 0 6-3 6H11z" fill="#c860c8"/><rect x="7" y="17" width="22" height="10" rx="2" fill="#f5b81f"/><text x="18" y="25.500" class="svgb" font-size="8.500" fill="#111" text-anchor="middle">PRE</text></svg></span>
    </div>
  </footer>
</div>
</body>
</html>
```

FILE: styles.css
```css
* { box-sizing: border-box; }
html, body { margin: 0; padding: 0; height: 100%; overflow: hidden; }
body { font-family: "Open Sans", "Noto Sans", "Liberation Sans", sans-serif; font-size: 14px; background: #020a1e; }
.defs { position: absolute; }
.svgt { font-family: "Open Sans", sans-serif; }
.svgb { font-family: "Open Sans", sans-serif; font-weight: 700; }
.svgm { font-family: "Open Sans", sans-serif; font-weight: 600; }

.screen { position: relative; width: 1920px; height: 1080px; display: flex; flex-direction: column; overflow: hidden; }
.wallpaper { position: absolute; inset: 0; width: 100%; height: 100%; }

.desktop { position: relative; flex: 1; min-height: 0; display: flex; margin-left: -1px; padding-top: 7px; }
.col { width: 95px; height: 976px; display: flex; flex-direction: column; flex: none; }
.col-gap-four { width: 380px; flex: none; }
.col-gap-three { width: 285px; flex: none; }
.tile { width: 95px; height: 122px; flex: none; display: flex; flex-direction: column; align-items: center; }
.tile-last { margin-top: auto; }
.ico { width: 60px; height: 60px; flex: none; }
.lbl { margin-top: 4px; color: #fff; font-size: 14px; line-height: 20px; letter-spacing: -.15px; text-align: center; white-space: nowrap; text-shadow: 0 1px 2px #000, 0 0 2px rgba(0,0,0,.7); }

.window { position: absolute; left: 267px; top: 145px; width: 1406px; height: 742px; display: flex; flex-direction: column; border-radius: 8px; overflow: hidden; box-shadow: 0 0 0 1px #343a44; color: #fff; }
.titlebar { height: 38px; flex: none; display: flex; align-items: center; background: #1e2229; padding-left: 8px; }
.title-ico { width: 22px; height: 20px; }
.title-text { margin-left: 4px; font-size: 14px; color: #f2f2f2; }
.caption { margin-left: auto; display: flex; margin-right: 1px; }
.cap-btn { width: 58px; height: 38px; display: flex; align-items: center; justify-content: center; }

.navbar { height: 65px; flex: none; display: flex; align-items: center; background: #191919; padding-left: 2px; }
.nav-btn { display: flex; align-items: center; justify-content: center; height: 40px; flex: none; margin-bottom: 2px; }
.nav-back { width: 49px; }
.nav-fwd { width: 40px; }
.nav-rec { width: 36px; }
.nav-up { width: 36px; margin-right: 9px; }
.address { width: 957px; height: 44px; flex: none; display: flex; align-items: center; border: 1px solid #5a5a5a; padding-left: 10px; }
.addr-ico { width: 22px; height: 20px; flex: none; }
.sep { width: 27px; display: flex; justify-content: center; flex: none; }
.sep-first { width: 25px; margin-left: -2px; }
.crumb { font-size: 14px; color: #f0f0f0; white-space: nowrap; margin-bottom: 2px; letter-spacing: -.04px; }
.addr-end { margin-left: auto; display: flex; align-items: center; gap: 33px; padding-right: 16px; }
.search { width: 253px; height: 44px; flex: none; margin-left: 12px; display: flex; align-items: center; justify-content: space-between; border: 1px solid #5a5a5a; padding: 0 19px 0 9px; }
.search-text { color: #6a6a6a; font-size: 14px; white-space: nowrap; }

.toolbar { height: 39px; flex: none; display: flex; align-items: center; gap: 36px; padding: 0 22px; background: #f5f6f7; border-bottom: 1px solid #e1e4e8; color: #1e395b; }
.tool { font-size: 14px; white-space: nowrap; letter-spacing: .1px; }
.tool-org { display: flex; align-items: center; gap: 6px; }
.caret { display: inline-block; width: 0; height: 0; border: 4px solid transparent; border-top: 4px solid #333; border-bottom: 0; }
.caret-blue { border-top-color: #1e395b; margin-left: 14px; }
.tool-right { margin-left: auto; display: flex; align-items: center; }
.tool-right svg { display: block; }
.tr-pane { margin-left: 28px; }
.tr-help { margin-left: 27px; margin-right: -3px; width: 20px; height: 20px; border-radius: 50%; background: #1d88e0; color: #fff; font-size: 14px; font-weight: 700; display: flex; align-items: center; justify-content: center; }

.content { flex: 1; min-height: 0; background: #fff; padding: 8px 18px; display: flex; gap: 5px; align-items: flex-start; }
.item { width: 313px; height: 68px; display: flex; align-items: center; border: 1px solid transparent; padding-left: 4px; color: #000; }
.item-selected { background: #cce8ff; border-color: #0a0a0a; border-radius: 1px; }
.item-ico { width: 60px; height: 64px; flex: none; }
.item-text { margin-left: 6px; display: flex; flex-direction: column; line-height: 21px; font-size: 14px; letter-spacing: .05px; white-space: nowrap; color: #1d1d1d; }
.item-text-muted { color: #6d6d6d; }
.item-text-muted span:first-child { color: #000; }

.statusbar { height: 30px; flex: none; display: flex; align-items: center; background: #1c1c1c; padding: 0 0 2px 17px; color: #e4e4e4; font-size: 14px; letter-spacing: .05px; }
.stat { padding-right: 12px; margin-right: 12px; border-right: 1px solid #e4e4e4; line-height: 17px; white-space: nowrap; }
.stat-right { margin-left: auto; display: flex; gap: 8px; padding-right: 9px; }
.vbtn { width: 20px; height: 20px; background: #aaa; border-radius: 2px; display: flex; align-items: center; justify-content: center; }

.taskbar { position: relative; height: 60px; flex: none; display: flex; align-items: center; padding-bottom: 2px; border-top: 1px solid #3a4150; background: linear-gradient(90deg, #1a202c 0, #172240 18%, #14245c 35%, #14235a 48%, #141f40 68%, #1a202c 85%, #1a202c 100%); }
.widget { width: 28px; margin-left: 27px; display: flex; }
.start { margin-left: 501px; width: 30px; display: flex; }
.tb-search { margin-left: 17px; width: 275px; height: 40px; border-radius: 20px; background: #333e72; border: 1px solid rgba(255,255,255,.1); display: flex; align-items: center; gap: 12px; padding-left: 14px; color: #e4e8f2; font-size: 16px; }
.apps { margin-left: 3px; display: flex; }
.app { position: relative; width: 55px; height: 50px; display: flex; align-items: center; justify-content: center; }
.tb-ico { width: 30px; height: 30px; }
.badge { position: absolute; right: 9px; top: 3px; width: 19px; height: 19px; border-radius: 50%; background: #45b5f5; color: #111; font-size: 12px; font-weight: 400; display: flex; align-items: center; justify-content: center; }
.app-active { background: rgba(255,255,255,.08); border-radius: 6px; width: 50px; margin-left: 3px; }
.active-bar { position: absolute; bottom: 2px; left: 15px; width: 20px; height: 4px; border-radius: 2px; background: #60cdff; }
.tray { margin-left: auto; display: flex; align-items: center; padding-right: 14px; color: #fff; }
.tray > span { display: flex; align-items: center; justify-content: center; flex: none; }
.t40 { width: 40px; }
.t56 { width: 56px; }
.t36 { width: 36px; }
.t26 { width: 26px; }
.t34 { width: 34px; }
.t86 { width: 86px; }
.t38 { width: 38px; }
.t52 { width: 52px; }
.tray-txt { font-size: 14px; }
.tray > .clock { flex-direction: column; align-items: flex-end; line-height: 20px; font-size: 14px; white-space: nowrap; }
```
